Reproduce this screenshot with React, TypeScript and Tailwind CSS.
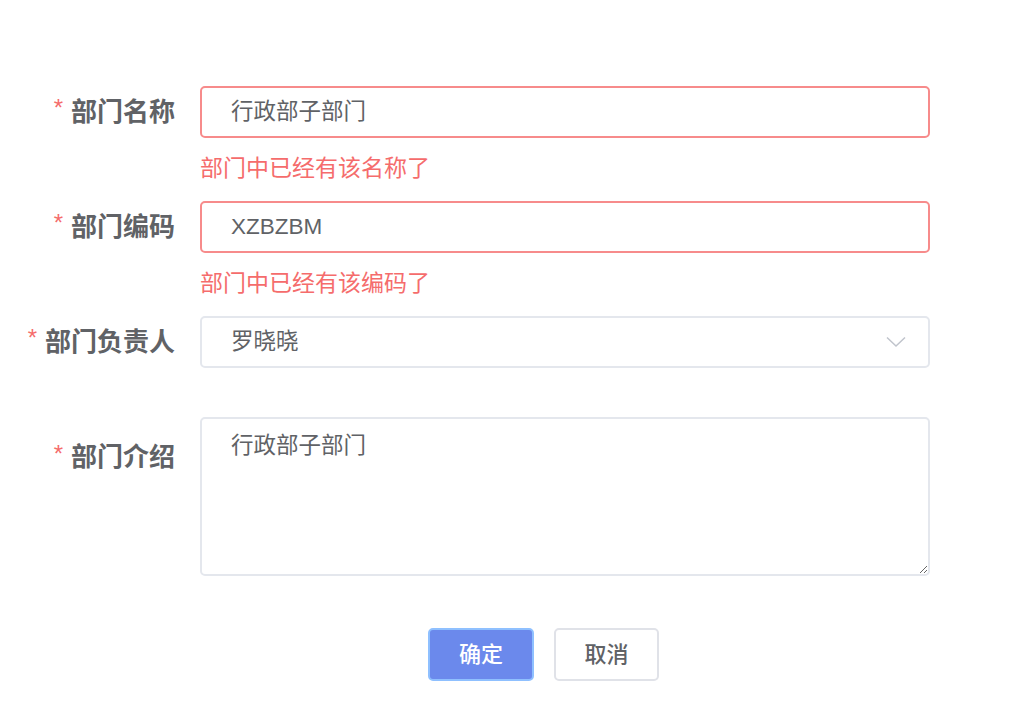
import React from "react";

const FONT = "font-['Liberation_Sans','Noto_Sans_CJK_SC',sans-serif]";

function Label({ text }: { text: string }) {
  return (
    <div className="flex w-[200px] shrink-0 items-center justify-end pr-[25px] text-[26px] font-semibold text-[#606266]">
      <span className="mr-[8px] -mt-[8px] text-[24px] font-normal text-[#f56c6c]">*</span>
      {text}
    </div>
  );
}

function Chevron() {
  return (
    <svg width="20" height="12" viewBox="0 0 20 12" fill="none">
      <path d="M1 1.5 L10 10 L19 1.5" stroke="#c0c4cc" strokeWidth="1.5" />
    </svg>
  );
}

export default function App() {
  return (
    <div className={`${FONT} min-h-[720px] w-[1033px] bg-white pt-[86px]`}>
      {/* 部门名称 */}
      <div className="flex">
        <div className="flex h-[52px]">
          <Label text="部门名称" />
        </div>
        <div className="w-[730px]">
          <div className="flex h-[52px] items-center rounded-[5px] border-2 border-[#f78b8b] px-[29px] text-[22.5px] text-[#606266]">
            行政部子部门
          </div>
          <div className="h-[63px] pt-[19px] text-[23px] leading-[22px] text-[#f56c6c]">
            部门中已经有该名称了
          </div>
        </div>
      </div>

      {/* 部门编码 */}
      <div className="flex">
        <div className="flex h-[52px]">
          <Label text="部门编码" />
        </div>
        <div className="w-[730px]">
          <div className="flex h-[52px] items-center rounded-[5px] border-2 border-[#f78b8b] px-[29px] text-[22.5px] text-[#606266]">
            XZBZBM
          </div>
          <div className="h-[63px] pt-[19px] text-[23px] leading-[22px] text-[#f56c6c]">
            部门中已经有该编码了
          </div>
        </div>
      </div>

      {/* 部门负责人 */}
      <div className="mb-[49px] flex">
        <div className="flex h-[52px]">
          <Label text="部门负责人" />
        </div>
        <div className="flex h-[52px] w-[730px] items-center justify-between rounded-[5px] border-2 border-[#e4e7ed] pl-[29px] pr-[22px] text-[22.5px] text-[#606266]">
          <span>罗晓晓</span>
          <Chevron />
        </div>
      </div>

      {/* 部门介绍 */}
      <div className="mb-[52px] flex">
        <div className="flex h-[78px] pt-[3px]">
          <Label text="部门介绍" />
        </div>
        <textarea
          className="block h-[159px] w-[730px] resize-y rounded-[5px] border-2 border-[#e4e7ed] px-[29px] pt-[12px] text-[22.5px] leading-[30px] text-[#606266] outline-none"
          defaultValue="行政部子部门"
        />
      </div>

      {/* buttons */}
      <div className="flex gap-[20px] pl-[428px]">
        <button className="h-[53px] w-[106px] rounded-[5px] border-2 border-[#8fc0ff] bg-[#6b89ec] text-[22px] font-medium text-white">
          确定
        </button>
        <button className="h-[53px] w-[105px] rounded-[5px] border-2 border-[#e0e2e8] bg-white text-[22px] font-medium text-[#606266]">
          取消
        </button>
      </div>
    </div>
  );
}
